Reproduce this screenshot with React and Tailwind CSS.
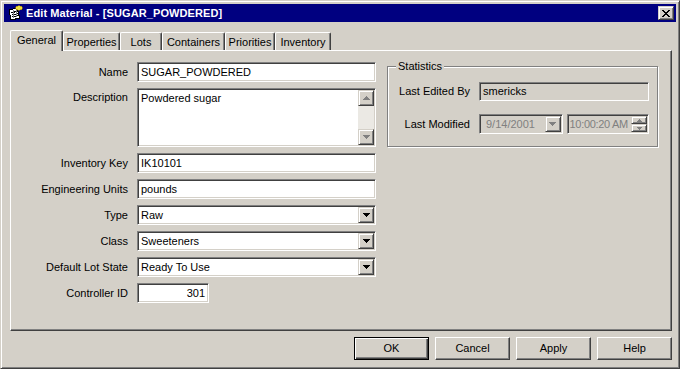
import React from 'react';

const sunken =
  'border border-t-[#808080] border-l-[#808080] border-b-white border-r-white shadow-[inset_1px_1px_#404040,inset_-1px_-1px_#d4d0c8]';
const raised =
  'border border-t-[#d4d0c8] border-l-[#d4d0c8] border-b-[#404040] border-r-[#404040] shadow-[inset_1px_1px_#fff,inset_-1px_-1px_#808080]';
const pushBtn =
  'border border-t-white border-l-white border-b-[#404040] border-r-[#404040] shadow-[inset_-1px_-1px_#808080]';

const Arrow = ({ up = false, color = '#000' }) => (
  <svg width="7" height="4" viewBox="0 0 7 4" shapeRendering="crispEdges">
    {up ? (
      <g fill={color}>
        <rect x="3" y="0" width="1" height="1" />
        <rect x="2" y="1" width="3" height="1" />
        <rect x="1" y="2" width="5" height="1" />
        <rect x="0" y="3" width="7" height="1" />
      </g>
    ) : (
      <g fill={color}>
        <rect x="0" y="0" width="7" height="1" />
        <rect x="1" y="1" width="5" height="1" />
        <rect x="2" y="2" width="3" height="1" />
        <rect x="3" y="3" width="1" height="1" />
      </g>
    )}
  </svg>
);

const Label = ({ children, top }) => (
  <div className={`flex justify-end h-[20px] ${top ? 'items-start pt-[3px]' : 'items-center'}`}>{children}</div>
);

const TextBox = ({ value, className = '' }) => (
  <div className={`h-[20px] bg-white ${sunken} flex items-center px-[3px] ${className}`}>{value}</div>
);

const Combo = ({ value }) => (
  <div className={`h-[20px] bg-white ${sunken} flex p-[1px]`}>
    <div className="flex-1 flex items-center pl-[2px]">{value}</div>
    <div className={`w-[16px] h-[16px] bg-[#d4d0c8] ${raised} flex items-center justify-center`}>
      <Arrow />
    </div>
  </div>
);

const tabs = [
  { name: 'General', w: 'w-[53px]' },
  { name: 'Properties', w: 'w-[57px]' },
  { name: 'Lots', w: 'w-[42px]' },
  { name: 'Containers', w: 'w-[63px]' },
  { name: 'Priorities', w: 'w-[50px]' },
  { name: 'Inventory', w: 'w-[56px]' },
];

const TitleIcon = () => (
  <svg width="16" height="16" viewBox="0 0 16 16" shapeRendering="crispEdges">
    <path d="M2 5 L10 3 L13 13 L4 15 Z" fill="#fff" stroke="#000" strokeWidth="1" />
    <path d="M4 8 L11 6 M5 10 L11.5 8.3 M5.5 12 L12 10.4" stroke="#000" strokeWidth="1" />
    <path d="M6 5 L7 13 M9 4.5 L10 12" stroke="#808080" strokeWidth="1" />
    <ellipse cx="12" cy="3" rx="3.5" ry="2.2" fill="#f0e040" stroke="#a08000" strokeWidth="0.6" />
  </svg>
);

export default function App() {
  return (
    <div className="w-[680px] h-[369px] bg-[#d4d0c8] border border-t-[#d4d0c8] border-l-[#d4d0c8] border-r-[#404040] border-b-[#404040] shadow-[inset_1px_1px_#fff,inset_-1px_-1px_#808080] p-[3px] text-[11px] leading-[13px] text-black font-['Liberation_Sans',Arial,sans-serif] select-none">
      {/* title bar */}
      <div className="h-[18px] bg-[#000080] flex items-center pl-[3px] pr-[2px]">
        <TitleIcon />
        <span className="ml-[3px] text-white font-bold text-[11px] tracking-[0.1px]">Edit Material - [SUGAR_POWDERED]</span>
        <div className={`ml-auto w-[16px] h-[14px] bg-[#d4d0c8] ${raised} flex items-center justify-center`}>
          <svg width="8" height="7" viewBox="0 0 8 7" shapeRendering="crispEdges">
            <path d="M0 0h2v1h1v1h2v-1h1v-1h2v1h-1v1h-1v1h-1v1h1v1h1v1h1v1h-2v-1h-1v-1h-2v1h-1v1h-2v-1h1v-1h1v-1h1v-1h-1v-1h-1v-1h-1z" fill="#000" />
          </svg>
        </div>
      </div>

      <div className="pl-[6px] pr-[4px] mt-[8px]">
        {/* tabs */}
        <div className="flex items-end h-[20px] relative z-10">
          {tabs.map((t, i) =>
            i === 0 ? (
              <div
                key={t.name}
                className={`${t.w} h-[21px] -mb-[1px] bg-[#d4d0c8] rounded-t-[2px] border-t border-l border-r border-t-white border-l-white border-r-[#404040] shadow-[inset_-1px_0_#808080] flex items-start justify-center pt-[3px]`}
              >
                {t.name}
              </div>
            ) : (
              <div
                key={t.name}
                className={`${t.w} h-[18px] bg-[#d4d0c8] rounded-t-[2px] border-t border-l border-r border-t-white border-l-white border-r-[#404040] shadow-[inset_-1px_0_#808080] flex items-center justify-center pt-[1px]`}
              >
                {t.name}
              </div>
            )
          )}
        </div>

        {/* tab panel */}
        <div className="h-[281px] border border-t-white border-l-white border-b-[#404040] border-r-[#404040] shadow-[inset_-1px_-1px_#808080] pt-[11px] flex items-start">
          <div className="grid grid-cols-[117px_239px] gap-x-[9px] gap-y-[6px]">
            <Label>Name</Label>
            <TextBox value="SUGAR_POWDERED" />

            <Label top>Description</Label>
            <div className={`h-[59px] bg-white ${sunken} flex p-[1px]`}>
              <div className="flex-1 pl-[2px] pt-[2px]">Powdered sugar</div>
              <div className="w-[16px] flex flex-col">
                <div className={`h-[16px] bg-[#d4d0c8] ${raised} flex items-center justify-center`}>
                  <Arrow up color="#808080" />
                </div>
                <div className="flex-1 bg-[#ebe9e4]" />
                <div className={`h-[16px] bg-[#d4d0c8] ${raised} flex items-center justify-center`}>
                  <Arrow color="#808080" />
                </div>
              </div>
            </div>

            <Label>Inventory Key</Label>
            <TextBox value="IK10101" />

            <Label>Engineering Units</Label>
            <TextBox value="pounds" />

            <Label>Type</Label>
            <Combo value="Raw" />

            <Label>Class</Label>
            <Combo value="Sweeteners" />

            <Label>Default Lot State</Label>
            <Combo value="Ready To Use" />

            <Label>Controller ID</Label>
            <div>
              <TextBox value="301" className="w-[72px] justify-end" />
            </div>
          </div>

          {/* statistics group */}
          <div className="ml-[11px] mt-[4px] w-[271px] relative border border-[#808080] shadow-[inset_1px_1px_#fff,1px_1px_#fff] pt-[15px] pb-[12px]">
            <span className="absolute -top-[7px] left-[8px] bg-[#d4d0c8] px-[2px]">Statistics</span>
            <div className="grid grid-cols-[82px_170px] gap-x-[9px] gap-y-[13px]">
              <div className="flex items-center justify-end h-[19px]">Last Edited By</div>
              <div className={`h-[19px] bg-[#d4d0c8] ${sunken} flex items-center px-[3px]`}>smericks</div>

              <div className="flex items-center justify-end h-[20px]">Last Modified</div>
              <div className="flex gap-[4px]">
                <div className={`w-[84px] h-[20px] bg-[#d4d0c8] ${sunken} flex p-[1px] text-[#808080]`}>
                  <div className="flex-1 flex items-center pl-[5px]">9/14/2001</div>
                  <div className={`w-[16px] h-[16px] bg-[#d4d0c8] ${raised} flex items-center justify-center`}>
                    <Arrow color="#808080" />
                  </div>
                </div>
                <div className={`w-[83px] h-[20px] bg-[#d4d0c8] ${sunken} flex p-[1px] text-[#808080]`}>
                  <div className="flex-1 min-w-0 flex items-center pl-[1px] whitespace-nowrap overflow-hidden tracking-[-0.3px]">10:00:20 AM</div>
                  <div className="w-[16px] shrink-0 flex flex-col">
                    <div className={`h-[8px] bg-[#d4d0c8] ${raised} flex items-center justify-center`}>
                      <svg width="5" height="3" viewBox="0 0 5 3" shapeRendering="crispEdges">
                        <path d="M2 0h1v1h1v1h1v1h-5v-1h1v-1h1z" fill="#808080" />
                      </svg>
                    </div>
                    <div className={`h-[8px] bg-[#d4d0c8] ${raised} flex items-center justify-center`}>
                      <svg width="5" height="3" viewBox="0 0 5 3" shapeRendering="crispEdges">
                        <path d="M0 0h5v1h-1v1h-1v1h-1v-1h-1v-1h-1z" fill="#808080" />
                      </svg>
                    </div>
                  </div>
                </div>
              </div>
            </div>
          </div>
        </div>

        {/* buttons */}
        <div className="flex justify-end gap-[6px] mt-[6px]">
          <div className="w-[75px] h-[23px] border border-black shadow-[inset_1px_1px_#fff,inset_-1px_-1px_#404040,inset_-2px_-2px_#808080] flex items-center justify-center">
            OK
          </div>
          {['Cancel', 'Apply', 'Help'].map((b) => (
            <div key={b} className={`w-[75px] h-[23px] ${pushBtn} flex items-center justify-center`}>
              {b}
            </div>
          ))}
        </div>
      </div>
    </div>
  );
}
